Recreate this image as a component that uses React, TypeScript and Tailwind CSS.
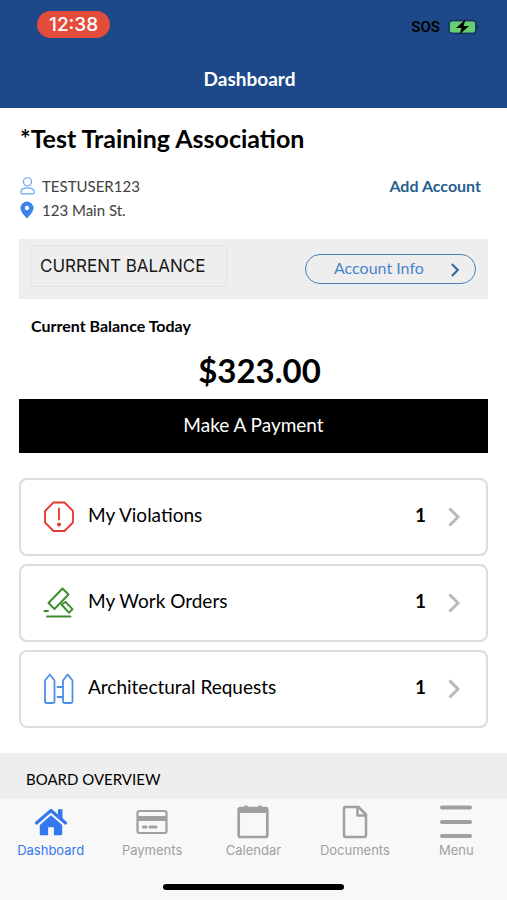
import React from "react"

type IconProps = { className?: string }

const UserIcon: React.FC<IconProps> = ({ className }) => (
  <svg viewBox="0 0 16 19" className={className} fill="none" stroke="currentColor" strokeWidth="1.3" aria-hidden="true">
    <circle cx="8" cy="5" r="4.3" />
    <path d="M.9 16.2C.9 13 3.5 11.6 8 11.6s7.1 1.4 7.1 4.600c0 1-.4 1.700-1.500 1.700H2.400C1.300 17.900.9 17.200.9 16.200Z" />
  </svg>
)

const PinIcon: React.FC<IconProps> = ({ className }) => (
  <svg viewBox="0 0 14 18" className={className} fill="currentColor" aria-hidden="true">
    <path fillRule="evenodd" d="M7 .5A6.500 6.500 0 0 0 .5 7C.5 10.300 3.500 13.800 7 17.500 10.500 13.800 13.500 10.300 13.500 7A6.500 6.500 0 0 0 7 .5Zm0 4.300a2.200 2.200 0 1 1 0 4.400 2.200 2.200 0 0 1 0-4.400Z" />
  </svg>
)

const ChevronIcon: React.FC<IconProps> = ({ className }) => (
  <svg viewBox="0 0 12 20" className={className} fill="none" stroke="currentColor" strokeWidth="3" aria-hidden="true">
    <path d="M1.500 1.500 10 10l-8.500 8.500" />
  </svg>
)

const BatteryIcon: React.FC<IconProps> = ({ className }) => (
  <svg viewBox="0 0 32 16" className={className} aria-hidden="true">
    <rect x="1" y="1.500" width="27" height="13" rx="3.500" fill="none" stroke="#16365f" strokeWidth="1.500" />
    <path d="M29.500 6v4.500c1-.3 1.600-1.200 1.600-2.200S30.500 6.300 29.500 6Z" fill="#16365f" />
    <rect x="2" y="2.500" width="25" height="11" rx="2" fill="#68cf70" />
    <path d="M17.500.5 8 9h5.500l-2 6.500L21 7h-5.500Z" fill="#000" />
  </svg>
)

const ViolationIcon = () => (
  <svg viewBox="0 0 32 32" className="size-8 text-[#e8352b]" fill="none" stroke="currentColor" strokeWidth="1.800" strokeLinejoin="round" aria-hidden="true">
    <path d="M10.500 1.500h11l8.500 8.500v11.500L21.500 30h-11L2 21.500V10Z" />
    <path d="M16 7.500v11" strokeLinecap="round" />
    <circle cx="16" cy="23.500" r="2" fill="currentColor" stroke="none" />
  </svg>
)

const WorkOrderIcon = () => (
  <svg viewBox="0 0 32 32" className="size-8 text-[#3c8c2c]" fill="none" stroke="currentColor" strokeWidth="1.900" strokeLinejoin="round" strokeLinecap="round" aria-hidden="true">
    <path d="m19.500 1.500 6 6L11.500 22l-6-6Z" />
    <path d="m18.500 17.500 7.500 8.300 3.500-3.600-7-7.200Z" />
    <path d="M1.500 24h3.500M4 29.500h23.500" />
  </svg>
)

const FenceIcon = () => (
  <svg viewBox="0 0 32 32" className="size-8 text-[#4a8fe8]" fill="none" stroke="currentColor" strokeWidth="1.800" strokeLinejoin="round" strokeLinecap="round" aria-hidden="true">
    <path d="M6.800 1.500 11.500 7.500v21c0 1-.5 1.500-1.500 1.500H3.500C2.500 30 2 29.500 2 28.500v-21Z" />
    <path d="M24.700 1.500 29.500 7.500v21c0 1-.5 1.500-1.500 1.500h-6.500c-1 0-1.500-.5-1.500-1.500v-21Z" />
    <path d="M14.500 14h5.500M14.500 24h5.500" />
  </svg>
)

const HomeIcon = () => (
  <svg viewBox="0 0 34 30" className="h-[30px] w-[34px]" aria-hidden="true">
    <path d="M2.500 16 17 3.500 31.500 16" fill="none" stroke="currentColor" strokeWidth="3.200" strokeLinecap="round" strokeLinejoin="round" />
    <path d="M24 2.300h4.500V12L24 8Z" fill="currentColor" />
    <path d="M17 8.300 5.800 18v9c0 .8.5 1.300 1.300 1.300h7v-8h5.800v8h7c.8 0 1.300-.5 1.300-1.300v-9Z" fill="currentColor" />
  </svg>
)

const PaymentIcon = () => (
  <svg viewBox="0 0 32 26" className="h-[26px] w-8" fill="none" stroke="currentColor" aria-hidden="true">
    <rect x="1.500" y="2" width="29" height="22" rx="2" strokeWidth="2.200" />
    <path d="M1 9.500h30" strokeWidth="5" />
    <path d="M7.500 18h2.500M14 18h6" strokeWidth="3" strokeLinecap="round" />
  </svg>
)

const CalendarIcon = () => (
  <svg viewBox="0 0 32 34" className="h-[34px] w-8" fill="none" stroke="currentColor" aria-hidden="true">
    <rect x="1.700" y="3" width="28.600" height="29" rx="2" strokeWidth="2.700" />
    <path d="M1.500 2.500h29v5.500h-29Z" fill="currentColor" stroke="none" />
    <path d="M9 2.200v2M23 2.200v2" strokeWidth="4" strokeLinecap="round" />
  </svg>
)

const DocumentIcon = () => (
  <svg viewBox="0 0 26 34" className="h-[34px] w-[26px]" fill="none" stroke="currentColor" strokeWidth="2.500" strokeLinejoin="round" aria-hidden="true">
    <path d="M3.500 2h13l7.500 7.500V30.500c0 .9-.6 1.500-1.500 1.500h-19C2.600 32 2 31.400 2 30.500v-27C2 2.600 2.600 2 3.500 2Z" />
    <path d="M15.500 2.500v8h8" />
  </svg>
)

const MenuIcon = () => (
  <svg viewBox="0 0 34 34" className="size-[34px]" fill="none" stroke="currentColor" strokeWidth="4" strokeLinecap="round" aria-hidden="true">
    <path d="M3 2.500h28M3 17h28M3 31h28" />
  </svg>
)

const cards = [
  { label: "My Violations", count: 1, Icon: ViolationIcon },
  { label: "My Work Orders", count: 1, Icon: WorkOrderIcon },
  { label: "Architectural Requests", count: 1, Icon: FenceIcon },
]

const tabs = [
  { label: "Dashboard", Icon: HomeIcon, active: true },
  { label: "Payments", Icon: PaymentIcon, active: false },
  { label: "Calendar", Icon: CalendarIcon, active: false },
  { label: "Documents", Icon: DocumentIcon, active: false },
  { label: "Menu", Icon: MenuIcon, active: false },
]

const App: React.FC = () => {
  return (
    <div className="flex h-screen flex-col bg-white font-['Lato',sans-serif] text-black">
      <header className="shrink-0 bg-[#1d4889] pb-[15px] text-white">
        <div className="flex h-[65px] items-start justify-between pt-[11px] pr-[27px] pl-[37px]">
          <span className="rounded-full bg-[#e34b3b] px-3 font-['Inter',sans-serif] text-[19px] leading-[27px] font-medium">12:38</span>
          <div className="flex items-center gap-2 pt-2 text-black">
            <span className="font-['Roboto',sans-serif] text-[15px] leading-4 font-semibold">SOS</span>
            <BatteryIcon className="h-4 w-8" />
          </div>
        </div>
        <h1 className="pr-2 text-center text-[19px] leading-7 font-bold">Dashboard</h1>
      </header>

      <main className="flex min-h-0 flex-1 flex-col overflow-hidden">
        <section className="px-5 pt-[14px]">
          <h2 className="text-[25px] leading-8 font-bold">*Test Training Association</h2>
          <div className="flex items-start justify-between pt-5 pr-[6px]">
            <div className="text-[15px] leading-6 text-[#404040]">
              <p className="flex items-center gap-[7px]">
                <UserIcon className="h-[18px] w-[15px] text-[#6ba5f0]" />
                TESTUSER123
              </p>
              <p className="flex items-center gap-2">
                <PinIcon className="h-[18px] w-[14px] text-[#3b82ea]" />
                123 Main St.
              </p>
            </div>
            <a href="#add-account" className="text-base leading-6 font-bold text-[#286090]">Add Account</a>
          </div>
        </section>

        <section className="px-[19px] pt-[17px]">
          <div className="flex h-[60px] items-center justify-between bg-[#eee] pr-3 pl-[11px]">
            <h3 className="mb-[6px] w-[197px] rounded border border-[#e2e2e2] px-[9px] py-2 font-['Inter',sans-serif] text-[17px] leading-6 text-[#181818]">
              CURRENT BALANCE
            </h3>
            <button className="flex h-[30px] w-[171px] items-center justify-between rounded-full border border-[#4a80b2] pr-[15px] pb-[2px] pl-7 text-base leading-6 text-[#4a83cc]">
              Account Info
              <ChevronIcon className="mt-1 h-[14px] w-[10px] text-[#34699c]" />
            </button>
          </div>
          <p className="px-3 pt-[15px] text-base leading-6 font-bold">Current Balance Today</p>
          <p className="pt-3 pr-1 pb-[9px] pl-4 text-center text-[33px] leading-10 font-bold">$323.00</p>
          <button className="h-[54px] w-full bg-black pb-[2px] text-[19px] text-white">Make A Payment</button>
        </section>

        <section className="flex flex-col gap-2 px-[19px] pt-[25px]">
          {cards.map(({ label, count, Icon }) => (
            <button key={label} className="flex h-[78px] items-center rounded-lg border-2 border-[#dcdcdc] pr-[26px] pl-[22px] text-[19px] leading-6">
              <Icon />
              <span className="flex-1 pb-1 pl-[13px] text-left">{label}</span>
              <span className="pb-1 font-bold">{count}</span>
              <ChevronIcon className="ml-[22px] h-5 w-3 text-[#b8b8b8]" />
            </button>
          ))}
        </section>

        <section className="mt-[25px] flex-1 bg-[#eee] px-[26px] pt-[14px]">
          <h3 className="text-[15px] leading-6">BOARD OVERVIEW</h3>
        </section>
      </main>

      <nav className="flex h-[101px] shrink-0 flex-col justify-between bg-[#f8f8f8] pb-[10px] font-['Inter',sans-serif]">
        <div className="grid grid-cols-5">
          {tabs.map(({ label, Icon, active }) => (
            <a
              key={label}
              href={`#${label.toLowerCase()}`}
              className={active ? "flex flex-col items-center text-[#3478f0]" : "flex flex-col items-center text-[#a0a0a0]"}
            >
              <span className="flex h-[43px] items-center justify-center pt-[2px]">
                <Icon />
              </span>
              <span className="text-[13px] leading-4">{label}</span>
            </a>
          ))}
        </div>
        <div className="h-[6px] w-[181px] self-center rounded-full bg-black" />
      </nav>
    </div>
  )
}

export default App
